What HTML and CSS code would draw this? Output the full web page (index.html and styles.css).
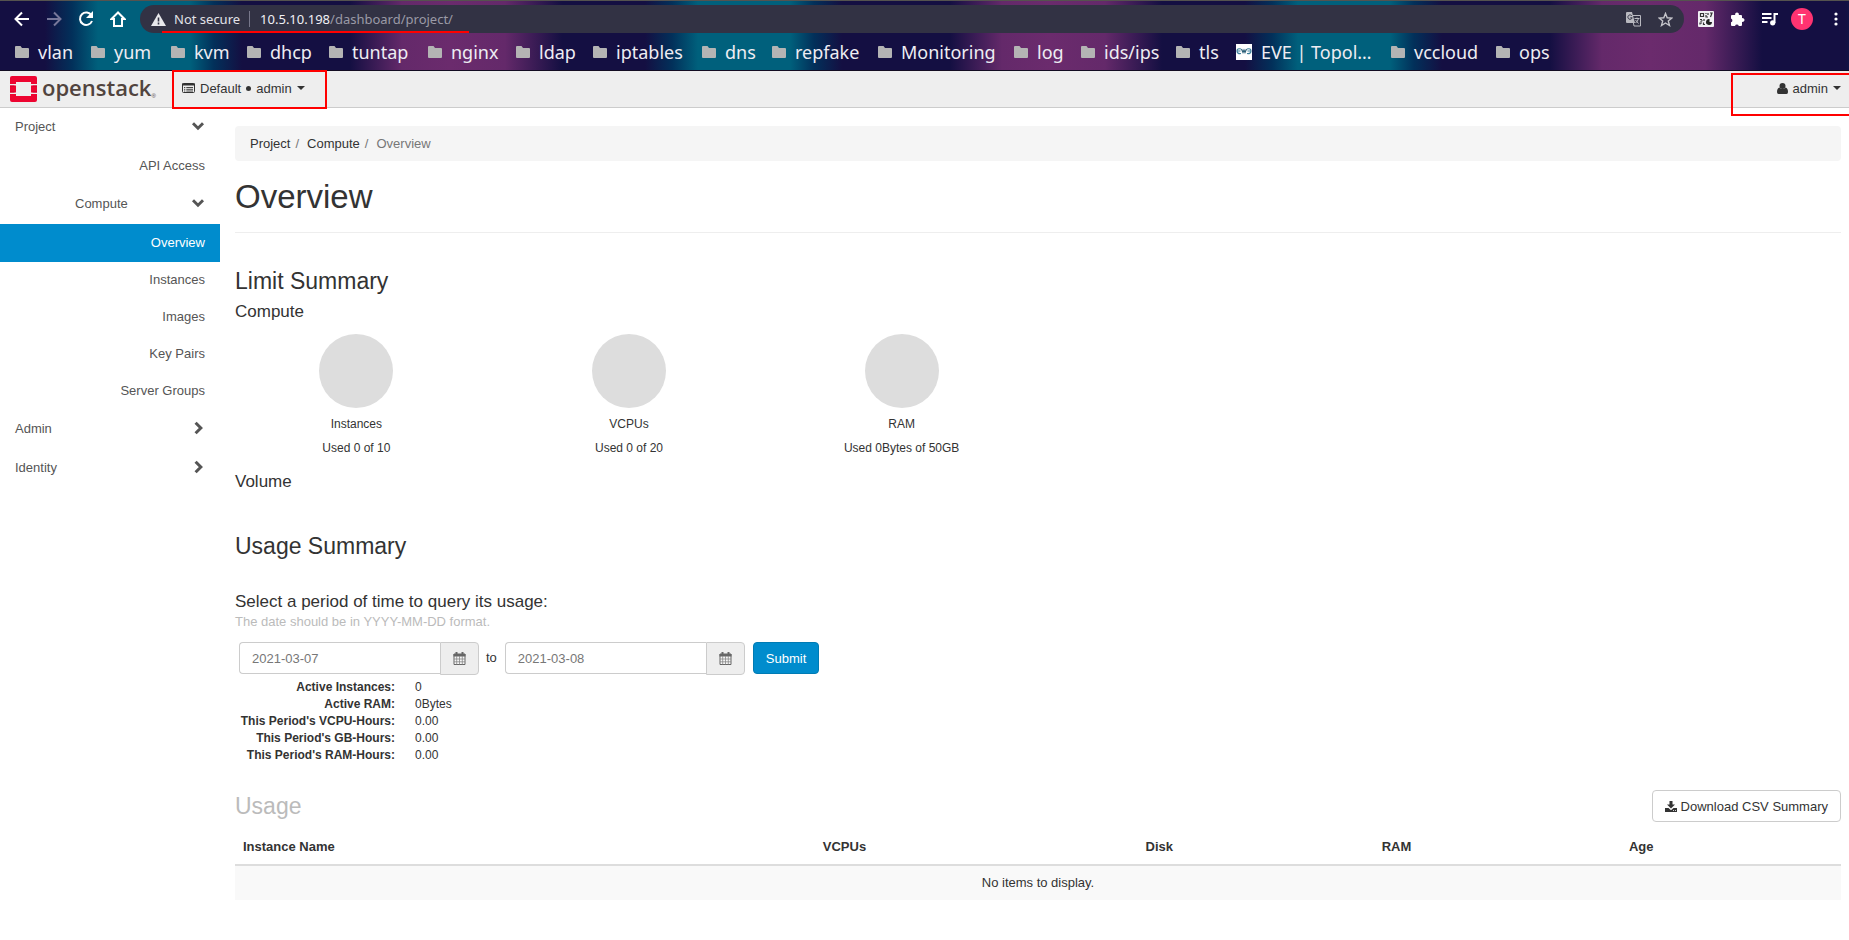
FILE: index.html
```html
<!DOCTYPE html>
<html lang="en">
<head>
<meta charset="utf-8">
<title>Overview - OpenStack Dashboard</title>
<link rel="stylesheet" href="styles.css">
</head>
<body>
<svg class="defs" aria-hidden="true">
  <symbol id="folder" viewBox="0 0 14 12"><path d="M1 0h4.500l1.500 2h6q1 0 1 1v8q0 1-1 1H1q-1 0-1-1V1q0-1 1-1z" fill="#b4b4b4"/></symbol>
  <symbol id="down" viewBox="0 0 12 9"><path d="M1.500 2l4.500 4.500L10.500 2" fill="none" stroke="currentColor" stroke-width="2.600"/></symbol>
  <symbol id="right" viewBox="0 0 9 12"><path d="M2 1.500L6.500 6 2 10.500" fill="none" stroke="currentColor" stroke-width="2.600"/></symbol>
  <symbol id="calendar" viewBox="0 0 13 13"><path d="M1 2h11v10.500H1z" fill="#f6f6f6" stroke="#666"/><path d="M.5 2h12v2.500H.5z" fill="#666"/><path d="M3.500 0v3M9.500 0v3" stroke="#666" stroke-width="2"/><path d="M3.700 4v8.500M6.500 4v8.500M9.300 4v8.500M1 7h11M1 9.800h11" stroke="#888" stroke-width=".8"/></symbol>
</svg>

<div class="browser">
  <div class="toolbar">
    <button class="tool" aria-label="Back"><svg width="16" height="16" viewBox="0 0 16 16"><path d="M15 8H2M8 1.500L1.500 8 8 14.500" fill="none" stroke="#fff" stroke-width="2"/></svg></button>
    <button class="tool" aria-label="Forward"><svg width="16" height="16" viewBox="0 0 16 16"><path d="M1 8h13M8 1.500L14.500 8 8 14.500" fill="none" stroke="#77779a" stroke-width="2"/></svg></button>
    <button class="tool" aria-label="Reload"><svg width="16" height="16" viewBox="0 0 16 16"><path d="M13.500 4.500A6.200 6.200 0 1 0 14 10" fill="none" stroke="#fff" stroke-width="2"/><path d="M15 0v7H8z" fill="#fff"/></svg></button>
    <button class="tool" aria-label="Home"><svg width="16" height="16" viewBox="0 0 16 16"><path d="M8 1.500L1.500 8H4v7h8V8h2.500z" fill="none" stroke="#fff" stroke-width="2"/></svg></button>
    <div class="address">
      <svg width="15" height="13" viewBox="0 0 15 13"><path d="M7.500 0L15 13H0z" fill="#e8e8ec"/><path d="M7.500 4.500v4M7.500 9.500v2" stroke="#323244" stroke-width="1.600"/></svg>
      <span class="insecure">Not secure</span>
      <span class="url">10.5.10.198<span class="path">/dashboard/project/</span></span>
      <span class="underline"></span>
      <button class="tool translate" aria-label="Translate"><svg width="15" height="15" viewBox="0 0 15 15"><path d="M6 3.500h8.500v10.500H8z" fill="none" stroke="#b9b9c0"/><path d="M0 1q0-1 1-1h5l3 11H1q-1 0-1-1z" fill="#b9b9c0"/><path d="M6 4A2.200 2.200 0 1 0 6.200 5.800H4.300" fill="none" stroke="#323244"/><path d="M8.500 6.500h5M11 5.500v1M12.500 6.500q-.8 3-3 4.500M9.500 8l3 3.500" stroke="#b9b9c0" fill="none"/></svg></button>
      <button class="tool" aria-label="Bookmark"><svg width="15" height="15" viewBox="0 0 15 15"><path d="M7.500 1.500l1.700 4.300 4.600.3-3.500 2.900 1.200 4.500-4-2.500-4 2.500L4.700 9 1.200 6.100l4.600-.3z" fill="none" stroke="#c4c4ca" stroke-width="1.400"/></svg></button>
    </div>
    <div class="extensions">
      <svg width="16" height="16" viewBox="0 0 16 16"><rect width="16" height="16" rx="1" fill="#f1eff4"/><path d="M2.500 2.500h3v3h-3zM8 2v1M8 4v2h2M10 2v2M12 2h2l-1.500 4M2 8.500h2M6 8v2M2.500 10.500l2-1M2 13.500v-1.500h2M5.500 11.500v2H7" fill="none" stroke="#333" stroke-width="1.200"/><path d="M11.500 8v3H14a3 3 0 1 1-2.500-3z" fill="#222"/></svg>
      <svg width="14" height="14" viewBox="0 0 14 14"><path d="M0 4q0-1 1-1h3.200a1.900 1.900 0 1 1 3.600 0H10q1 0 1 1v2.200a1.900 1.900 0 1 1 0 3.600V13q0 1-1 1H7.800a2 2 0 0 0-3.800 0H1q-1 0-1-1v-2.700a2 2 0 0 0 0-3.800z" fill="#fff"/></svg>
      <svg width="16" height="14" viewBox="0 0 16 14"><path d="M0 2h9.500M0 6h9.500M0 10h5.500M12.500 11V2H16" stroke="#fff" stroke-width="2" fill="none"/><circle cx="10.700" cy="10.800" r="2.600" fill="#fff"/></svg>
      <span class="avatar">T</span>
      <svg width="4" height="14" viewBox="0 0 4 14"><circle cx="2" cy="2" r="1.600" fill="#fff"/><circle cx="2" cy="7" r="1.600" fill="#fff"/><circle cx="2" cy="12" r="1.600" fill="#fff"/></svg>
    </div>
  </div>
  <nav class="bookmarks" aria-label="Bookmarks">
    <a href="#"><svg><use href="#folder"/></svg>vlan</a>
    <a href="#"><svg><use href="#folder"/></svg>yum</a>
    <a href="#"><svg><use href="#folder"/></svg>kvm</a>
    <a href="#"><svg><use href="#folder"/></svg>dhcp</a>
    <a href="#"><svg><use href="#folder"/></svg>tuntap</a>
    <a href="#"><svg><use href="#folder"/></svg>nginx</a>
    <a href="#"><svg><use href="#folder"/></svg>ldap</a>
    <a href="#"><svg><use href="#folder"/></svg>iptables</a>
    <a href="#"><svg><use href="#folder"/></svg>dns</a>
    <a href="#"><svg><use href="#folder"/></svg>repfake</a>
    <a href="#"><svg><use href="#folder"/></svg>Monitoring</a>
    <a href="#"><svg><use href="#folder"/></svg>log</a>
    <a href="#"><svg><use href="#folder"/></svg>ids/ips</a>
    <a href="#"><svg><use href="#folder"/></svg>tls</a>
    <a href="#"><svg class="eve" viewBox="0 0 16 16"><path d="M0 0h16v16H0z" fill="#fff"/><path d="M5 5Q1 4 1 7t4 2.500M1 7h3.500M11 5q4-1 4 2t-4 2.500M11.500 7H15" fill="none" stroke="#3d819c" stroke-width="1.200"/><path d="M5.500 5L7 8.500 8 6l1 2.500L10.500 5" fill="none" stroke="#2b5f78" stroke-width="1.200"/></svg>EVE | Topol…</a>
    <a href="#"><svg><use href="#folder"/></svg>vccloud</a>
    <a href="#"><svg><use href="#folder"/></svg>ops</a>
  </nav>
</div>

<header class="topbar">
  <a class="brand" href="#" aria-label="openstack">
    <svg width="27" height="26" viewBox="0 0 27 26"><path d="M2 0h23q2 0 2 2v6h-6V6H6v2H0V2q0-2 2-2zM0 9.500h6v7H0zM21 9.500h6v7h-6zM0 18h6v2h15v-2h6v6q0 2-2 2H2q-2 0-2-2z" fill="#ed0531"/><path d="M0 10h4.500M22.500 10H27M0 16h4.500M22.500 16H27" stroke="#c9002b"/></svg>
    <span class="word">openstack</span><span class="reg">®</span>
  </a>
  <button class="menu"><svg width="13" height="10" viewBox="0 0 13 10"><rect x=".5" y=".5" width="12" height="9" rx="1" fill="none" stroke="#333"/><path d="M0 1.500h13" stroke="#333" stroke-width="2"/><path d="M2 4.500h1.300M4.300 4.500H11M2 6.300h1.300M4.300 6.300H11M2 8h1.300M4.300 8H11" stroke="#333" stroke-width=".9"/></svg><span>Default</span><i class="dot"></i><span>admin</span><i class="caret"></i></button>
  <button class="menu user"><svg width="11" height="11" viewBox="0 0 11 11"><circle cx="5.500" cy="3" r="3" fill="#333"/><path d="M2.500 4.500q3 3 6 0Q11 5 11 9q0 2-1.500 2h-8Q0 11 0 9q0-4 2.500-4.500z" fill="#333"/></svg><span>admin</span><i class="caret"></i></button>
  <span class="mark mark-project"></span>
  <span class="mark mark-user"></span>
</header>

<div class="layout">
  <nav class="sidebar" aria-label="Dashboard">
    <a class="group" href="#">Project<svg class="chev-d"><use href="#down"/></svg></a>
    <a class="leaf last" href="#">API Access</a>
    <a class="group nested" href="#">Compute<svg class="chev-d"><use href="#down"/></svg></a>
    <a class="leaf active" href="#" aria-current="page">Overview</a>
    <a class="leaf" href="#">Instances</a>
    <a class="leaf" href="#">Images</a>
    <a class="leaf" href="#">Key Pairs</a>
    <a class="leaf" href="#">Server Groups</a>
    <a class="group" href="#">Admin<svg class="chev-r"><use href="#right"/></svg></a>
    <a class="group" href="#">Identity<svg class="chev-r"><use href="#right"/></svg></a>
  </nav>

  <main class="content">
    <ol class="breadcrumb">
      <li><a href="#">Project</a></li>
      <li><a href="#">Compute</a></li>
      <li class="current">Overview</li>
    </ol>
    <h1>Overview</h1>

    <section class="limits">
      <h2>Limit Summary</h2>
      <h3>Compute</h3>
      <div class="quotas">
        <div class="quota"><div class="pie"></div><p>Instances</p><p>Used 0 of 10</p></div>
        <div class="quota"><div class="pie"></div><p>VCPUs</p><p>Used 0 of 20</p></div>
        <div class="quota"><div class="pie"></div><p>RAM</p><p>Used 0Bytes of 50GB</p></div>
      </div>
      <h3>Volume</h3>
    </section>

    <section class="summary">
      <h2>Usage Summary</h2>
      <h3>Select a period of time to query its usage:</h3>
      <p class="help">The date should be in YYYY-MM-DD format.</p>
      <form class="period">
        <div class="date"><input type="text" value="2021-03-07" aria-label="From"><span class="addon"><svg><use href="#calendar"/></svg></span></div>
        <label for="end">to</label>
        <div class="date"><input id="end" type="text" value="2021-03-08"><span class="addon"><svg><use href="#calendar"/></svg></span></div>
        <button class="submit" type="submit">Submit</button>
      </form>
      <dl class="stats">
        <dt>Active Instances:</dt><dd>0</dd>
        <dt>Active RAM:</dt><dd>0Bytes</dd>
        <dt>This Period's VCPU-Hours:</dt><dd>0.00</dd>
        <dt>This Period's GB-Hours:</dt><dd>0.00</dd>
        <dt>This Period's RAM-Hours:</dt><dd>0.00</dd>
      </dl>
    </section>

    <section>
      <div class="table-head">
        <h2>Usage</h2>
        <button class="download"><svg width="12" height="11" viewBox="0 0 12 11"><path d="M4.500 0h3v3.500H10L6 7.500 2 3.500h2.500z" fill="#333"/><path d="M0 7h3.500L6 9.200 8.500 7H12v4H0z" fill="#333"/><path d="M8 9.500h1M10 9.500h1" stroke="#fff" stroke-width=".8"/></svg>Download CSV Summary</button>
      </div>
      <table>
        <colgroup><col class="c-name"><col class="c-cpu"><col class="c-disk"><col class="c-ram"><col class="c-age"></colgroup>
        <thead><tr><th>Instance Name</th><th>VCPUs</th><th>Disk</th><th>RAM</th><th>Age</th></tr></thead>
        <tbody><tr><td colspan="5">No items to display.</td></tr></tbody>
      </table>
    </section>
  </main>
</div>
</body>
</html>
```

FILE: styles.css
```css
* { box-sizing: border-box; }
body {
  margin: 0;
  background: #fff;
  color: #333;
  font: 13px/19px "Liberation Sans", Arial, sans-serif;
}
a { color: inherit; text-decoration: none; }
button { font: inherit; color: inherit; cursor: pointer; }
h1, h2, h3, p, dl, dd, ol { margin: 0; padding: 0; }
.defs { position: absolute; width: 0; height: 0; }

/* Browser chrome */
.browser {
  height: 71px;
  padding-top: 4px;
  border-top: 1px solid #55534f;
  border-bottom: 1px solid #120c22;
  background: repeating-linear-gradient(90deg,
    #140f42 0, #140f42 45px, #02305a 72px, #00607c 98px, #00607c 190px,
    #02305a 214px, #140f42 242px, #140f42 350px, #64296a 402px,
    #6b2b6d 450px, #64296a 505px, #140f42 562px, #140f42 600px);
  font-family: "Noto Sans", sans-serif;
}
.toolbar { display: flex; align-items: center; height: 28px; padding: 0 11px 0 14px; }
.tool { display: flex; margin: 0 16px 0 0; padding: 0; border: 0; background: none; }
.address {
  position: relative;
  display: flex;
  flex: 1;
  align-items: center;
  height: 28px;
  margin-left: -2px;
  padding: 0 11px;
  border-radius: 14px;
  background: #323244;
  color: #f0f0f4;
}
.address .tool:last-child { margin-right: 0; }
.insecure { margin: 0 9px 0 8px; color: #e2e2e8; }
.url { padding-left: 10px; border-left: 1px solid #77778a; line-height: 16px; }
.path { color: #9a9aa6; }
.address .translate { margin-left: auto; margin-right: 17px; }
.underline { position: absolute; left: 22px; bottom: 0; width: 307px; height: 2px; background: #f00; }
.extensions { display: flex; align-items: center; gap: 15px; margin-left: 14px; }
.extensions svg:nth-child(1), .extensions svg:nth-child(2) { margin-right: 2px; }
.extensions svg:last-child { margin-left: 6px; }
.avatar {
  width: 22px;
  height: 22px;
  margin-left: -2px;
  border-radius: 50%;
  background: #ff3371;
  color: #fff;
  font-size: 14px;
  text-align: center;
  line-height: 22px;
}
.bookmarks {
  display: grid;
  grid-template-columns: 76px 80px 76px 82px 99px 88px 77px 109px 70px 106px 136px 67px 95px 60px 155px 105px 80px;
  height: 36px;
  padding: 3px 0 0 15px;
  color: #eeedf3;
  font-size: 18px;
  white-space: nowrap;
}
.bookmarks a { display: flex; align-items: center; gap: 9px; }
.bookmarks svg { width: 14px; height: 12px; flex: none; margin-bottom: 2px; }
.bookmarks .eve { width: 16px; height: 16px; }

/* Dashboard header */
.topbar {
  position: relative;
  display: flex;
  align-items: center;
  height: 37px;
  padding: 0 8px 0 10px;
  background: #eee;
  border-bottom: 1px solid #ccc;
}
.brand { display: flex; align-items: center; width: 172px; color: #51443e; }
.word { margin: -4px 0 0 5px; font: 600 22px/28px "Open Sans", sans-serif; }
.reg { align-self: flex-end; font-size: 6px; line-height: 12px; }
.menu { display: flex; align-items: center; gap: 5px; height: 36px; padding: 0 0 2px; border: 0; background: none; }
.user { margin-left: auto; }
.dot { width: 5px; height: 5px; border-radius: 50%; background: #333; }
.caret { border: 4px solid transparent; border-top-color: #333; border-bottom: 0; }
.mark { position: absolute; border: 2px solid #f00; pointer-events: none; }
.mark-project { left: 172px; top: -1px; width: 155px; height: 39px; }
.mark-user { right: 0; top: 2px; width: 118px; height: 43px; border-right: 0; }

/* Layout */
.layout { display: flex; }
.sidebar { flex: none; width: 220px; color: #555; }
.group, .leaf { display: flex; align-items: center; height: 37px; padding: 0 15px 2px; }
.group { justify-content: space-between; height: 38px; margin-bottom: 1px; }
.nested { padding-left: 75px; }
.leaf { justify-content: flex-end; }
.last { margin-bottom: 1px; padding-bottom: 0; }
.active { height: 38px; background: #008ccd; color: #fff; }
.chev-d { width: 14px; height: 10px; }
.chev-r { width: 13px; height: 14px; }
.content { flex: 1; min-width: 0; padding: 18px 8px 0 15px; }

.breadcrumb {
  display: flex;
  padding: 8px 15px;
  border-radius: 4px;
  background: #f5f5f5;
  list-style: none;
}
.breadcrumb li + li::before { content: "/"; padding: 0 8px 0 5px; color: #777; }
.breadcrumb .current { color: #777; }
h1 { margin-top: 18px; padding-bottom: 17px; border-bottom: 1px solid #eee; font-size: 33px; font-weight: 400; line-height: 36px; }
h2 { font-size: 23px; font-weight: 400; line-height: 25px; }
h3 { font-size: 17px; font-weight: 400; line-height: 19px; }
.limits { padding-top: 36px; }
.limits h2 { margin-bottom: 8px; }
.quotas { display: grid; grid-template-columns: repeat(6, 1fr); margin: 13px -15px 15px; font-size: 12px; line-height: 17px; text-align: center; }
.quota p { margin-top: 7px; }
.pie { width: 74px; height: 74px; margin: 0 auto 8px; border-radius: 50%; background: #ddd; }

.summary { padding-top: 43px; }
.summary h3 { margin-top: 33px; }
.help { margin-top: 1px; color: #bbb; }
.period { display: flex; align-items: flex-start; margin: 11px 0 0 4px; }
.period label { padding: 6px 8px 0 7px; }
.date { display: flex; align-items: flex-start; }
.date input {
  width: 201px;
  height: 32px;
  padding: 0 12px;
  border: 1px solid #ccc;
  border-right: 0;
  border-radius: 4px 0 0 4px;
  color: #777;
  font: inherit;
}
.addon {
  display: flex;
  align-items: center;
  justify-content: center;
  width: 39px;
  height: 33px;
  border: 1px solid #ccc;
  border-radius: 0 4px 4px 0;
  background: #eee;
}
.addon svg { width: 13px; height: 13px; }
.submit { height: 32px; margin-left: 8px; padding: 0 12px; border: 1px solid #007bb4; border-radius: 4px; background: #008ccd; color: #fff; }
.stats { display: grid; grid-template-columns: 160px 1fr; column-gap: 20px; margin-top: 4px; font-size: 12px; line-height: 17px; }
.stats dt { text-align: right; font-weight: 700; white-space: nowrap; }

.table-head { display: flex; align-items: center; justify-content: space-between; margin-top: 26px; color: #bbb; }
.download { display: flex; align-items: center; gap: 4px; height: 32px; padding: 0 12px; border: 1px solid #ccc; border-radius: 4px; background: #fff; color: #333; }
table { width: 100%; margin-top: 7px; border-collapse: collapse; table-layout: fixed; }
.c-name { width: 36.1%; }
.c-cpu { width: 20.1%; }
.c-disk { width: 14.7%; }
.c-ram { width: 15.4%; }
.c-age { width: 13.7%; }
th { padding: 8px; border-bottom: 2px solid #ddd; text-align: left; }
td { padding: 8px; background: #f9f9f9; text-align: center; line-height: 18px; }
```
